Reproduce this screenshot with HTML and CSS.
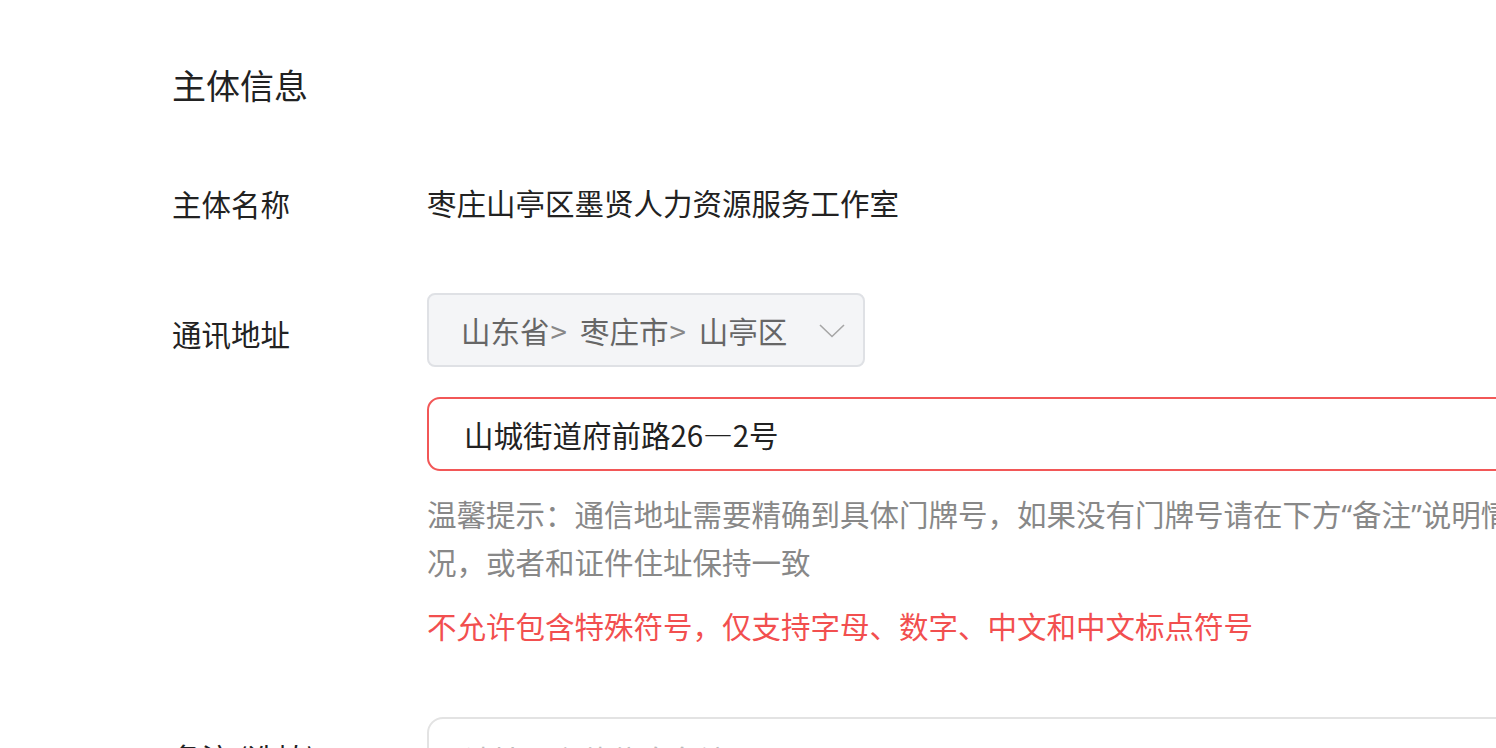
FILE: index.html
```html
<!DOCTYPE html>
<html lang="zh-CN">
<head>
    <meta charset="UTF-8">
    <meta name="viewport" content="width=device-width, initial-scale=1.0">
    <title>主体信息</title>
    <link rel="stylesheet" href="styles.css">
</head>
<body>
    <div class="page">
        <h2 class="section-title">主体信息</h2>

        <div class="form-row row-static">
            <div class="label">主体名称</div>
            <div class="field">
                <div class="value">枣庄山亭区墨贤人力资源服务工作室</div>
            </div>
        </div>

        <div class="form-row row-address">
            <div class="label">通讯地址</div>
            <div class="field">
                <div class="region-select">
                    <span class="region-text">山东省<span class="sep">&gt;</span>枣庄市<span class="sep">&gt;</span>山亭区</span>
                    <svg class="arrow" width="26" height="14" viewBox="0 0 26 14">
                        <path d="M1 1 L13 12.5 L25 1" fill="none" stroke="#a6a6a6" stroke-width="1.6"/>
                    </svg>
                </div>
                <input class="text-input input-error" type="text" value="山城街道府前路26—2号">
                <p class="hint">温馨提示：通信地址需要精确到具体门牌号，如果没有门牌号请在下方<span class="quote">“</span>备注<span class="quote">”</span>说明情况，或者和证件住址保持一致</p>
                <p class="error-msg">不允许包含特殊符号，仅支持字母、数字、中文和中文标点符号</p>
            </div>
        </div>

        <div class="form-row">
            <div class="label">备注 (选填)</div>
            <div class="field">
                <textarea class="text-area" placeholder="请填写主体信息备注"></textarea>
            </div>
        </div>
    </div>
</body>
</html>
```

FILE: styles.css
```css
* {
    margin: 0;
    padding: 0;
    box-sizing: border-box;
}
body {
    background: #fff;
    overflow: hidden;
    font-family: "Noto Sans CJK SC", "Noto Sans", sans-serif;
    color: #222;
}
.page {
    padding: 61px 0 0 172px;
    width: 1720px;
}
.section-title {
    font-size: 34px;
    font-weight: normal;
    line-height: 48px;
    margin-bottom: 57px;
}
.form-row {
    display: flex;
    margin-bottom: 53px;
    font-size: 29.5px;
}
.label {
    width: 255px;
    flex-shrink: 0;
    line-height: 74px;
    padding-top: 3px;
}
.row-static .label {
    padding-top: 0;
}
.field {
    width: 1090px;
}
.value {
    line-height: 73px;
}
.region-select {
    width: 438px;
    height: 74px;
    background: #f4f5f7;
    border: 2px solid #dfe1e5;
    border-radius: 8px;
    display: flex;
    align-items: center;
    justify-content: space-between;
    padding: 0 18px 0 32px;
    color: #666;
}
.sep {
    margin: 0 13px 0 1px;
    color: #888;
}
.arrow {
    margin-top: 2px;
}
.text-input {
    display: block;
    width: 100%;
    height: 74px;
    margin-top: 30px;
    border: 2px solid #dcdfe6;
    border-radius: 13px;
    padding: 0 35px;
    font-family: inherit;
    font-size: 29.5px;
    color: #222;
    outline: none;
}
.input-error {
    border-color: #f25757;
}
.hint {
    margin-top: 19px;
    line-height: 47px;
    color: #888;
}
.quote {
    font-family: "Noto Sans", sans-serif;
}
.error-msg {
    margin-top: 17px;
    line-height: 47px;
    color: #f24f4f;
}
.row-address {
    margin-bottom: 68px;
}
.text-area {
    display: block;
    width: 100%;
    height: 160px;
    border: 2px solid #e3e3e3;
    border-radius: 16px;
    padding: 20px 35px;
    font-family: inherit;
    font-size: 29.5px;
    line-height: 40px;
    resize: none;
    outline: none;
}
.text-area::placeholder {
    color: #bbb;
}
```
